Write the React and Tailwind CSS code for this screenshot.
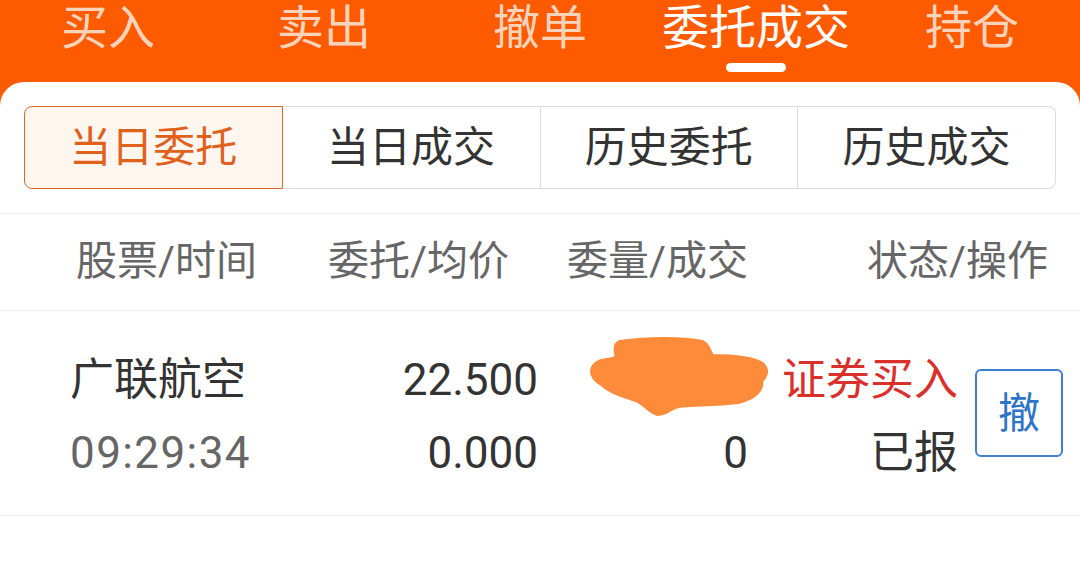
import React, { useState } from 'react';

const topTabs = ['买入', '卖出', '撤单', '委托成交', '持仓'];
const subTabs = ['当日委托', '当日成交', '历史委托', '历史成交'];

const font = { fontFamily: 'Roboto, "Noto Sans CJK SC", sans-serif' };

// orange scribble covering the order volume
const Scribble = () => (
  <svg width="184" height="84" viewBox="0 0 184 84" className="block">
    <path
      d="M32 8 C60 4 95 4 114 8 C120 10 120 18 124 22 C145 22 165 24 174 30 C180 36 176 42 172 46 C174 54 166 62 150 66 C125 69 105 68 90 70 C82 72 78 78 70 78 C62 76 58 68 48 64 C36 60 22 56 14 48 C6 44 2 36 8 30 C14 24 24 28 30 22 C28 16 28 10 32 8 Z"
      fill="#fd8b3a"
      stroke="#fd8b3a"
      strokeWidth="6"
      strokeLinejoin="round"
    />
  </svg>
);

export default function App() {
  const [tab, setTab] = useState(3);
  const [sub, setSub] = useState(0);

  return (
    <div className="w-[1080px] h-[562px] bg-[#fe5a00] flex flex-col overflow-hidden" style={font}>
      {/* top tabs */}
      <div className="grid grid-cols-5 h-[82px] shrink-0">
        {topTabs.map((t, i) => (
          <div key={t} className="flex flex-col items-center cursor-pointer" onClick={() => setTab(i)}>
            <span
              className={`leading-[56px] text-[47px] ${i === tab ? 'text-white' : 'text-[#fbd3bb]'}`}
            >
              {t}
            </span>
            {i === tab && <div className="mt-[7px] w-[60px] h-[9px] rounded-full bg-white" />}
          </div>
        ))}
      </div>

      {/* card */}
      <div className="flex-1 bg-white rounded-t-[24px]">
        <div className="mx-[24px] mt-[24px] h-[83px] flex">
          {subTabs.map((t, i) => (
            <div
              key={t}
              onClick={() => setSub(i)}
              className={`flex-1 flex items-center justify-center text-[42px] cursor-pointer ${
                i === sub
                  ? 'bg-[#fff6f0] text-[#e0611c] border border-[#d9692a]'
                  : 'text-[#333333] border-y border-r border-[#dcdcdc]'
              } ${i === 0 ? 'rounded-l-[8px]' : ''} ${i === 3 ? 'rounded-r-[8px]' : ''}`}
            >
              {t}
            </div>
          ))}
        </div>

        {/* table header */}
        <div className="mt-[24px] h-[98px] flex items-center border-y border-[#ececec] text-[41px] text-[#666666]">
          <div className="w-[328px] pl-[76px]">股票/时间</div>
          <div className="w-[239px]">委托/均价</div>
          <div className="w-[300px]">委量/成交</div>
          <div className="flex-1">状态/操作</div>
        </div>

        {/* order row */}
        <div className="h-[205px] flex items-center border-b border-[#ececec] text-[44px] leading-[73px] text-[#333333]">
          <div className="w-[300px] pl-[70px] pt-[8px]">
            <div>广联航空</div>
            <div className="text-[#666666] tracking-[1.4px]">09:29:34</div>
          </div>
          <div className="w-[238px] text-right pt-[8px]">
            <div>22.500</div>
            <div>0.000</div>
          </div>
          <div className="w-[210px] text-right pt-[8px]">
            <div className="relative h-[73px]">
              <div className="absolute left-[50px] top-[-9px]">
                <Scribble />
              </div>
            </div>
            <div>0</div>
          </div>
          <div className="w-[210px] text-right pt-[8px]">
            <div className="text-[#d9302b]">证券买入</div>
            <div>已报</div>
          </div>
          <button className="ml-[17px] w-[88px] h-[88px] border-2 border-[#3d80d0] rounded-[6px] text-[#2f74c8] text-[42px] flex items-center justify-center">
            撤
          </button>
        </div>
      </div>
    </div>
  );
}
